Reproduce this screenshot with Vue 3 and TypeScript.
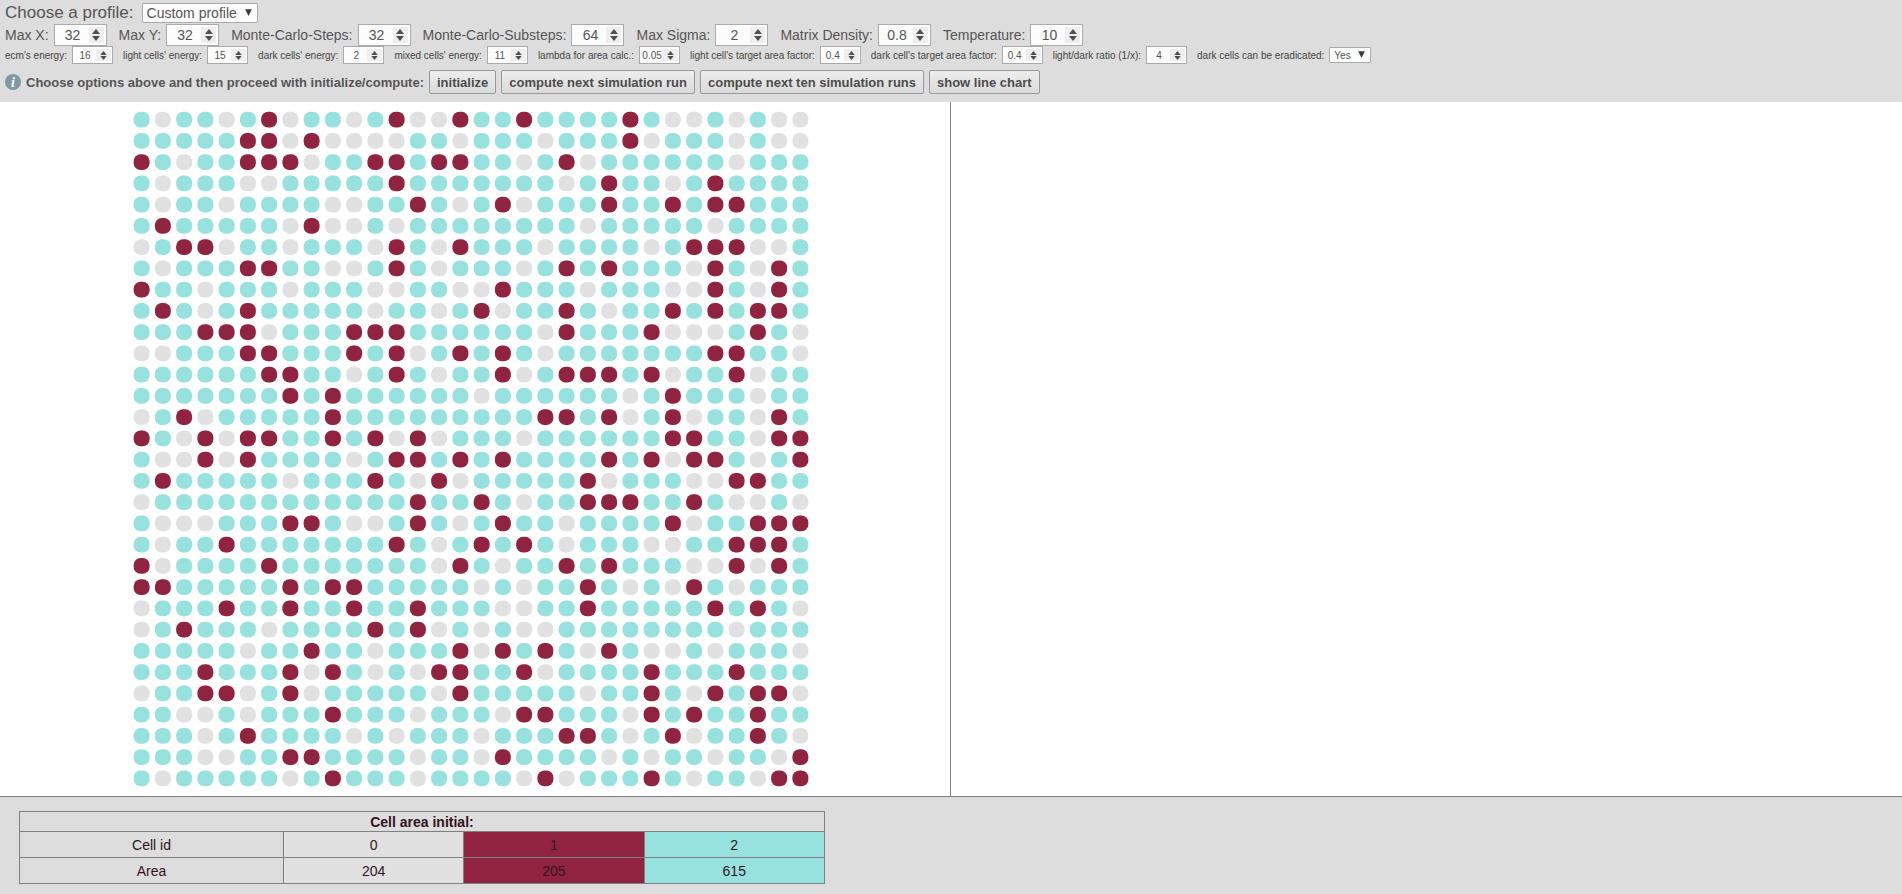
<script setup lang="ts">
import { computed, reactive, ref } from 'vue'

interface NumberOption {
  id: string
  label: string
  value: string
}

const mainOptions = reactive<NumberOption[]>([
  { id: 'max-x', label: 'Max X:', value: '32' },
  { id: 'max-y', label: 'Max Y:', value: '32' },
  { id: 'mc-steps', label: 'Monte-Carlo-Steps:', value: '32' },
  { id: 'mc-substeps', label: 'Monte-Carlo-Substeps:', value: '64' },
  { id: 'max-sigma', label: 'Max Sigma:', value: '2' },
  { id: 'density', label: 'Matrix Density:', value: '0.8' },
  { id: 'temperature', label: 'Temperature:', value: '10' },
])

const energyOptions = reactive<NumberOption[]>([
  { id: 'ecm', label: "ecm's energy:", value: '16' },
  { id: 'light', label: "light cells' energy:", value: '15' },
  { id: 'dark', label: "dark cells' energy:", value: '2' },
  { id: 'mixed', label: "mixed cells' energy:", value: '11' },
  { id: 'lambda', label: 'lambda for area calc.:', value: '0.05' },
  { id: 'light-target', label: "light cell's target area factor:", value: '0.4' },
  { id: 'dark-target', label: "dark cell's target area factor:", value: '0.4' },
  { id: 'ratio', label: 'light/dark ratio (1/x):', value: '4' },
])

const profile = ref('Custom profile')
const eradicate = ref('Yes')

const actions = ['initialize', 'compute next simulation run', 'compute next ten simulation runs', 'show line chart']

// One digit per lattice site: 0 = matrix, 1 = dark cell, 2 = light cell
const lattice: string[] = [
  '20220210220210012212222120020200',
  '22222110100002202220222102220200',
  '12022111022112112202102222220222',
  '20222002222212222222021220212222',
  '20220222200221202102221221211222',
  '21222220100202222222202222202222',
  '02110220222012012220222202111002',
  '20222112200212022202121222012012',
  '12202220222002200122202220012012',
  '21202122222022021022120221212112',
  '22211102221112222220122210002120',
  '00222112221210212120222222211220',
  '22222211220212022102111210221022',
  '22222221212222220222222021222022',
  '02102222212222222221121021022012',
  '12010112212101022202222221122011',
  '20010122220211212122221210112021',
  '21222220222120102222210222001122',
  '02222222222221221202211122120020',
  '20002221120021202122022221022111',
  '20221222222212021212022200221112',
  '10222212222222012022121222001012',
  '11222221211222220202212020120222',
  '02221221221221222002212222212120',
  '02122202222121020200222222220222',
  '22222022122022210121201200202220',
  '22212221012020112210222212221222',
  '02211021022222012222202212012110',
  '22002022212220222011222012122122',
  '22202122220202220222112021022120',
  '22200221122220220122220202202201',
  '20222220212220222201022212022011',
]

const colors = ['#e1e1e1', '#90233f', '#97e1df']

const cells = lattice.flatMap((row, y) => [...row].map((id, x) => ({ x, y, id: Number(id) })))
const areas = computed(() => colors.map((_, id) => cells.filter((c) => c.id === id).length))

function step(option: NumberOption, direction: number) {
  const decimals = option.value.split('.')[1]?.length ?? 0
  option.value = (Number(option.value) + direction / 10 ** decimals).toFixed(decimals)
}
</script>

<template>
  <div class="page">
    <header class="controls">
      <div class="row profile-row">
        <label for="profile">Choose a profile:</label>
        <span class="select">
          <select id="profile" v-model="profile">
            <option>Custom profile</option>
          </select>
          <svg class="arrow" viewBox="0 0 8 8" aria-hidden="true"><path d="M1 1h6L4 7z" /></svg>
        </span>
      </div>

      <div class="row main-row">
        <div v-for="o in mainOptions" :key="o.id" class="field">
          <label :for="o.id">{{ o.label }}</label>
          <span class="number">
            <input :id="o.id" v-model="o.value" type="text" inputmode="decimal" />
            <span class="spinner">
              <button type="button" aria-label="Increase" @click="step(o, 1)">
                <svg viewBox="0 0 8 5" aria-hidden="true"><path d="M4 0l4 5H0z" /></svg>
              </button>
              <button type="button" aria-label="Decrease" @click="step(o, -1)">
                <svg viewBox="0 0 8 5" aria-hidden="true"><path d="M0 0h8L4 5z" /></svg>
              </button>
            </span>
          </span>
        </div>
      </div>

      <div class="row energy-row">
        <div v-for="o in energyOptions" :key="o.id" class="field">
          <label :for="o.id">{{ o.label }}</label>
          <span class="number">
            <input :id="o.id" v-model="o.value" type="text" inputmode="decimal" />
            <span class="spinner">
              <button type="button" aria-label="Increase" @click="step(o, 1)">
                <svg viewBox="0 0 8 5" aria-hidden="true"><path d="M4 0l4 5H0z" /></svg>
              </button>
              <button type="button" aria-label="Decrease" @click="step(o, -1)">
                <svg viewBox="0 0 8 5" aria-hidden="true"><path d="M0 0h8L4 5z" /></svg>
              </button>
            </span>
          </span>
        </div>
        <div class="field">
          <label for="eradicate">dark cells can be eradicated:</label>
          <span class="select">
            <select id="eradicate" v-model="eradicate">
              <option>Yes</option>
              <option>No</option>
            </select>
            <svg class="arrow" viewBox="0 0 8 8" aria-hidden="true"><path d="M1 1h6L4 7z" /></svg>
          </span>
        </div>
      </div>

      <div class="row action-row">
        <svg class="info" viewBox="0 0 16 16" aria-hidden="true">
          <circle cx="8" cy="8" r="8" fill="#7c9aa5" />
          <text x="8" y="13" text-anchor="middle">i</text>
        </svg>
        <span class="hint">Choose options above and then proceed with initialize/compute:</span>
        <button v-for="a in actions" :key="a" type="button" class="action">{{ a }}</button>
      </div>
    </header>

    <main class="panels">
      <section class="panel lattice">
        <svg viewBox="0 0 640 640" role="img" aria-label="Cell lattice">
          <rect
            v-for="c in cells"
            :key="c.y * 32 + c.x"
            :x="c.x * 20 + 2.5"
            :y="c.y * 20 + 2.5"
            width="15"
            height="15"
            rx="6.5"
            :fill="colors[c.id]"
          />
        </svg>
      </section>
      <section class="panel"></section>
    </main>

    <footer class="summary">
      <table>
        <colgroup>
          <col class="name" />
          <col span="3" />
        </colgroup>
        <thead>
          <tr>
            <th colspan="4">Cell area initial:</th>
          </tr>
        </thead>
        <tbody>
          <tr>
            <td>Cell id</td>
            <td v-for="(_, id) in areas" :key="id" :class="'kind-' + id">{{ id }}</td>
          </tr>
          <tr>
            <td>Area</td>
            <td v-for="(area, id) in areas" :key="id" :class="'kind-' + id">{{ area }}</td>
          </tr>
        </tbody>
      </table>
    </footer>
  </div>
</template>

<style>
body {
  margin: 0;
  background: #ddd;
}
</style>

<style scoped>
.page {
  display: flex;
  flex-direction: column;
  min-height: 100vh;
  background: #ddd;
  color: #555;
  font-family: 'Liberation Sans', Arial, sans-serif;
  font-size: 14px;
}

.controls {
  padding: 2px 5px 8px;
}

.row {
  display: flex;
  align-items: center;
}

.profile-row {
  gap: 8px;
  height: 22px;
  font-size: 17px;
}

.main-row {
  gap: 12px;
  height: 22px;
}

.energy-row {
  gap: 10px;
  height: 18px;
  color: #444;
  font-size: 10px;
}

.action-row {
  gap: 5px;
  height: 24px;
  margin-top: 6px;
}

.field {
  display: flex;
  align-items: center;
  gap: 5px;
  white-space: nowrap;
}

.number {
  display: flex;
  box-sizing: border-box;
  width: 53px;
  height: 22px;
  padding: 2px;
  border: 1px solid #aaa;
  background: #fcfcfc;
}

.number input {
  flex: 1;
  min-width: 0;
  padding: 0;
  border: 0;
  background: none;
  color: #555;
  font: inherit;
  text-align: center;
}

.spinner {
  display: flex;
  flex-direction: column;
  justify-content: center;
  gap: 2px;
  width: 15px;
  background: #eee;
}

.spinner button {
  display: flex;
  justify-content: center;
  padding: 0;
  border: 0;
  background: none;
}

.spinner svg {
  width: 8px;
  height: 5px;
  fill: #4f4f4f;
}

.energy-row .number {
  width: 41px;
  height: 18px;
  padding: 2px 1px;
}

.energy-row .spinner {
  gap: 1px;
}

.energy-row .spinner svg {
  width: 7px;
  height: 4px;
}

.select {
  position: relative;
  display: flex;
}

.select select {
  appearance: none;
  box-sizing: border-box;
  width: 116px;
  height: 20px;
  padding: 0 0 0 4px;
  border: 1px solid #aaa;
  border-radius: 1px;
  background: #fcfcfc;
  color: #555;
  font: 14px 'Liberation Sans', Arial, sans-serif;
}

.arrow {
  position: absolute;
  top: 5px;
  right: 5px;
  width: 9px;
  height: 9px;
  fill: #3c3c3c;
  pointer-events: none;
}

.energy-row select {
  width: 42px;
  height: 16px;
  font-size: 10px;
}

.energy-row .arrow {
  top: 3px;
}

.info {
  width: 16px;
  height: 16px;
}

.info text {
  fill: #fff;
  font: italic bold 14px 'Liberation Serif', serif;
}

.hint {
  font-size: 13px;
  font-weight: bold;
}

.action {
  height: 24px;
  padding: 0 7px;
  border: 1px solid #999;
  border-radius: 2px;
  background: linear-gradient(#eee, #dadada);
  color: #4c4c4c;
  font: bold 13px 'Liberation Sans', Arial, sans-serif;
}

.panels {
  display: flex;
  flex: 1;
  border-bottom: 1px solid #808080;
  background: #fff;
}

.panel {
  box-sizing: border-box;
  width: 50%;
}

.lattice {
  display: flex;
  align-items: center;
  justify-content: center;
  padding: 7px 8px 7px 0;
  border-right: 1px solid #808080;
}

.lattice svg {
  width: 100%;
  max-width: 680px;
  aspect-ratio: 1;
}

.summary {
  padding: 14px 0 10px 1%;
}

table {
  width: 42.8%;
  border-collapse: collapse;
  table-layout: fixed;
  color: #33131c;
  text-align: center;
}

th,
td {
  height: 25px;
  padding: 0;
  border: 1px solid #808080;
}

th {
  height: 19px;
}

.name {
  width: 32.8%;
}

.kind-0 {
  background: #e1e1e1;
}

.kind-1 {
  background: #90233f;
}

.kind-2 {
  background: #97e1df;
}
</style>
